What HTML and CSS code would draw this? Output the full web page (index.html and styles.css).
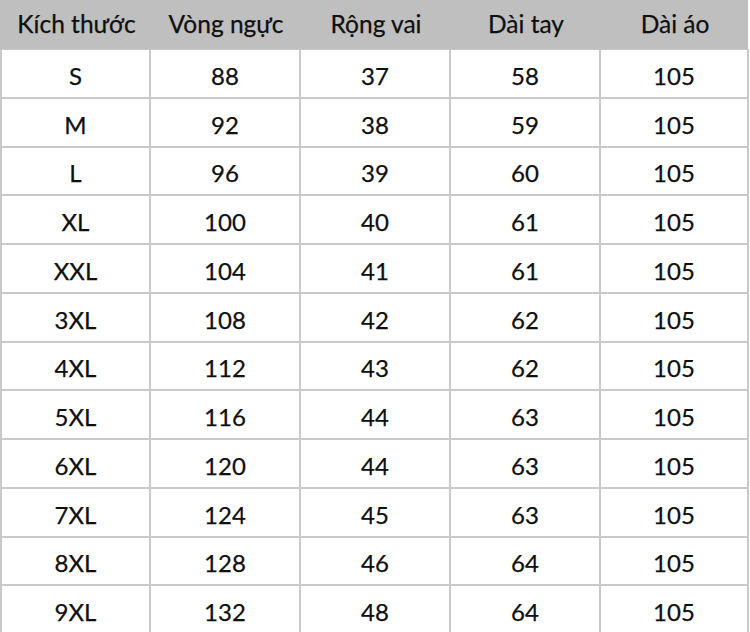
FILE: index.html
```html
<!DOCTYPE html>
<html lang="vi">
<head>
<meta charset="utf-8">
<title>Bảng kích thước</title>
<link rel="stylesheet" href="styles.css">
</head>
<body>
<div class="sheet">
  <div class="head">
    <div class="hcell">Kích thước</div>
    <div class="hcell">Vòng ngực</div>
    <div class="hcell">Rộng vai</div>
    <div class="hcell">Dài tay</div>
    <div class="hcell">Dài áo</div>
  </div>
  <div class="body">
    <div class="cell">S</div><div class="cell">88</div><div class="cell">37</div><div class="cell">58</div><div class="cell">105</div>
    <div class="cell">M</div><div class="cell">92</div><div class="cell">38</div><div class="cell">59</div><div class="cell">105</div>
    <div class="cell">L</div><div class="cell">96</div><div class="cell">39</div><div class="cell">60</div><div class="cell">105</div>
    <div class="cell">XL</div><div class="cell">100</div><div class="cell">40</div><div class="cell">61</div><div class="cell">105</div>
    <div class="cell">XXL</div><div class="cell">104</div><div class="cell">41</div><div class="cell">61</div><div class="cell">105</div>
    <div class="cell">3XL</div><div class="cell">108</div><div class="cell">42</div><div class="cell">62</div><div class="cell">105</div>
    <div class="cell">4XL</div><div class="cell">112</div><div class="cell">43</div><div class="cell">62</div><div class="cell">105</div>
    <div class="cell">5XL</div><div class="cell">116</div><div class="cell">44</div><div class="cell">63</div><div class="cell">105</div>
    <div class="cell">6XL</div><div class="cell">120</div><div class="cell">44</div><div class="cell">63</div><div class="cell">105</div>
    <div class="cell">7XL</div><div class="cell">124</div><div class="cell">45</div><div class="cell">63</div><div class="cell">105</div>
    <div class="cell">8XL</div><div class="cell">128</div><div class="cell">46</div><div class="cell">64</div><div class="cell">105</div>
    <div class="cell">9XL</div><div class="cell">132</div><div class="cell">48</div><div class="cell">64</div><div class="cell">105</div>
  </div>
</div>
</body>
</html>
```
FILE: styles.css
```css
html, body {
  margin: 0;
  padding: 0;
  background: #ffffff;
}
body {
  width: 750px;
  height: 632px;
  overflow: hidden;
  font-family: Lato, "Open Sans", "Liberation Sans", sans-serif;
  color: #0f0f0f;
}
.sheet {
  width: 749px;
}
.head {
  display: grid;
  grid-template-columns: 149px 150px 150px 150px 148px;
  height: 49px;
  background: #bfbfbf;
  padding-left: 2px;
  box-sizing: border-box;
  width: 748px;
}
.hcell {
  display: flex;
  align-items: center;
  justify-content: center;
  font-size: 24.5px;
  padding-bottom: 2px;
  -webkit-text-stroke: 0.25px #0f0f0f;
}
.body {
  display: grid;
  grid-template-columns: 147px 148px 148px 148px 146px;
  grid-auto-rows: 46.75px;
  gap: 2px;
  padding: 1px 2px 0 2px;
  background: #c9c9c9;
}
.cell {
  background: #ffffff;
  display: flex;
  align-items: center;
  justify-content: center;
  font-size: 24px;
  padding-top: 4px;
  box-sizing: border-box;
  -webkit-text-stroke: 0.25px #0f0f0f;
}
```
